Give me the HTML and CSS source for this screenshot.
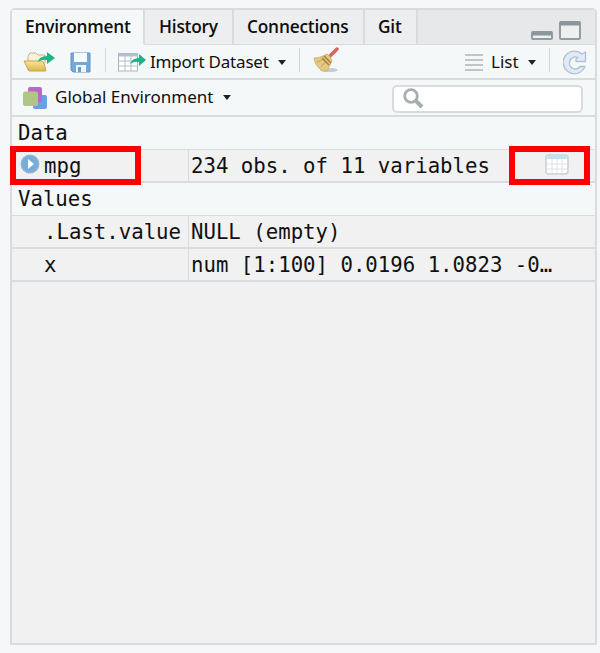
FILE: index.html
```html
<!DOCTYPE html>
<html lang="en">
<head>
<meta charset="utf-8">
<title>Environment</title>
<link rel="stylesheet" href="styles.css">
</head>
<body>
<main class="pane">
  <nav class="tabs">
    <div class="tab tab-env active"><span>Environment</span></div>
    <div class="tab tab-history"><span>History</span></div>
    <div class="tab tab-conn"><span>Connections</span></div>
    <div class="tab tab-git"><span>Git</span></div>
    <div class="window-buttons">
      <svg width="22" height="9" viewBox="0 0 22 9"><rect x="1" y="1" width="20" height="7" rx="1" fill="#edf0f1" stroke="#929da1" stroke-width="2"/><path d="M1 2.5h20" stroke="#8b979b" stroke-width="4"/></svg>
      <svg width="22" height="19" viewBox="0 0 22 19"><rect x="1" y="1" width="20" height="17" rx="1" fill="#edf0f1" stroke="#929da1" stroke-width="2"/><path d="M1 2.5h20" stroke="#8b979b" stroke-width="4"/></svg>
    </div>
  </nav>

  <div class="toolbar">
    <svg class="i-open" width="32" height="22" viewBox="0 0 32 22">
      <defs><linearGradient id="gold" x2="0" y2="1"><stop stop-color="#f6e59f"/><stop offset="1" stop-color="#dfb646"/></linearGradient></defs>
      <path d="M5 19V5l2-3h6l2 2h7v8" fill="#f7f2dc" stroke="#c5b27c"/>
      <path d="M1 10h17q2 0 3 2l2 8H6Z" fill="url(#gold)" stroke="#c9a347" stroke-linejoin="round"/>
      <path d="M15 11Q16 5 24 5V1l8 6-8 6V9Q19 8 15 11Z" fill="#1eb486"/>
    </svg>
    <svg class="i-save" width="21" height="21" viewBox="0 0 21 21">
      <path d="M1 1h19v19H3l-2-2Z" fill="#75a8d5" stroke="#5e96c7"/>
      <path d="M4 1h13v9H4Z" fill="#f5fafc"/><path d="M6 13h10v7H6Z" fill="#edf5fa"/><path d="M8 15h3v5H8Z" fill="#679dcd"/>
    </svg>
    <i class="sep sep-a"></i>
    <svg class="i-import" width="28" height="21" viewBox="0 0 28 21">
      <rect x=".5" y="1.500" width="19" height="17.500" fill="#fff" stroke="#a9b5c2"/>
      <path d="M1 3h19" stroke="#b5c0cc" stroke-width="3"/>
      <path d="M7 4v15M13 4v15M1 9h18M1 14h18" stroke="#b3bec9"/>
      <path d="M12 12Q14 6 21 6V2l7 6-7 6v-4q-5-1-9 2Z" fill="#1eb486"/>
    </svg>
    <span class="label import-label">Import Dataset</span>
    <i class="caret"></i>
    <i class="sep sep-b"></i>
    <svg class="i-broom" width="27" height="26" viewBox="0 0 27 26">
      <ellipse cx="16" cy="23" rx="9" ry="2" fill="#c8cecf"/>
      <path d="M17 9 24 2" stroke="#d8665e" stroke-width="3.500" stroke-linecap="round"/>
      <path d="M10 9 14 7q4 2 5 7L14 24q-4 1-7-2l-3-3-2-4-1-4q5 0 9-2Z" fill="#e3c983" stroke="#c5a65c" stroke-width=".7"/>
      <path d="m11 9 7 7M9 11l7 7" fill="none" stroke="#a97a3e" stroke-width="1.500"/><path d="m4 15 5-2M8 20l4-5" fill="none" stroke="#c3a35c"/>
    </svg>
    <svg class="i-list" width="18" height="17" viewBox="0 0 18 17"><path d="M0 1h18M0 6h18M0 11h18M0 16h18" stroke="#adb4b8" stroke-width="1.600"/></svg>
    <span class="label list-label">List</span>
    <i class="caret"></i>
    <i class="sep sep-c"></i>
    <svg class="i-refresh" width="24" height="25" viewBox="0 0 24 25">
      <path d="M19 4 22.500 2v9.500h-9.500V9l2-1.500A6 6 0 0 0 6.500 13a5.800 5.800 0 0 0 10.500 3.500h5A11.300 11.300 0 1 1 12 1.200 11 11 0 0 1 19 4Z" fill="#e1eaf7" stroke="#b2c0d0" stroke-width="1.300" stroke-linejoin="round"/>
    </svg>
  </div>

  <div class="scope">
    <svg class="i-scope" width="24" height="22" viewBox="0 0 24 22"><rect x="10" y="8" width="14" height="14" rx="2" fill="#6aa0e5"/><rect x="5" y="0" width="14" height="15" rx="2" fill="#b968c8"/><rect x="0" y="4.500" width="15" height="14.500" rx="2" fill="#b1c685"/></svg>
    <span class="label scope-label">Global Environment</span>
    <i class="caret"></i>
    <div class="search"><svg width="21" height="21" viewBox="0 0 21 21"><circle cx="8" cy="8" r="6.300" fill="none" stroke="#a5afb2" stroke-width="2.800"/><path d="m13 13 6 6" stroke="#a5afb2" stroke-width="4"/></svg></div>
  </div>

  <section class="objects">
    <h2 class="group">Data</h2>
    <div class="row">
      <div class="name"><svg class="i-expand" width="20" height="20" viewBox="0 0 20 20"><circle cx="10" cy="10" r="8.700" fill="#78add9" stroke="#91b3d0" stroke-width="1.500"/><path d="m8 5 6 5-6 5Z" fill="#fff"/></svg>mpg</div>
      <div class="value">234 obs. of 11 variables</div>
      <svg class="i-grid" width="24" height="21" viewBox="0 0 24 21"><rect x="1" y="1" width="22" height="19" rx="3" fill="#fff" stroke="#cbd1d6" stroke-width="1.600"/><path d="M3 1.500h18l1 3.500H2Z" fill="#bfe0ec"/><path d="M7 5v14M12 5v14M17 5v14M2 10h20M2 15h20" stroke="#dce0e5"/></svg>
      <b class="mark mark-name"></b><b class="mark mark-grid"></b>
    </div>
    <h2 class="group">Values</h2>
    <div class="row"><div class="name">.Last.value</div><div class="value">NULL (empty)</div></div>
    <div class="row"><div class="name">x</div><div class="value">num [1:100] 0.0196 1.0823 -0…</div></div>
  </section>
</main>
</body>
</html>
```
FILE: styles.css
```css
* { box-sizing: border-box; }
body {
  margin: 0;
  padding: 8px 3px 8px 10px;
  height: 653px;
  background: #f5f7f9;
  color: #101010;
  font-family: "Noto Sans", "Open Sans", sans-serif;
}
svg { display: block; flex: none; }
.pane {
  height: 637px;
  border: 2px solid #d8dcdf;
  border-radius: 5px 5px 0 0;
  background: #f1f1f1;
}
.tabs { display: flex; height: 35px; background: #e6e8e9; }
.tab {
  border-right: 2px solid #d8dcdf;
  border-bottom: 1px solid #d8dcdf;
  background: #eceeef;
  font: 600 17.3px/33px "Open Sans", sans-serif;
  letter-spacing: -0.2px;
  white-space: nowrap;
  padding-left: 13px;
}
.tab.active { background: #f4f8f9; border-bottom-color: #f4f8f9; }
.tab-env { width: 133px; }
.tab-history { width: 89px; padding-left: 14px; }
.tab-conn { width: 131px; }
.tab-git { width: 53px; }
.window-buttons {
  flex: 1;
  display: flex;
  justify-content: flex-end;
  align-items: flex-end;
  gap: 6px;
  padding: 0 14px 4px 0;
  border-bottom: 1px solid #d8dcdf;
}
.toolbar, .scope {
  display: flex;
  align-items: center;
  background: #f4f8f9;
  border-bottom: 2px solid #d8dcdf;
}
.toolbar { height: 35px; padding-top: 1px; }
.scope { height: 37px; }
.label { font-size: 17px; line-height: 24px; white-space: nowrap; flex: none; }
.caret {
  flex: none;
  border: 4px solid transparent;
  border-top: 5px solid #222;
  border-bottom: 0;
}
.sep { flex: none; width: 1px; height: 24px; margin-bottom: 4px; background: #d0d4d7; }
.i-open { margin-left: 11px; }
.i-save { margin-left: 15px; }
.sep-a { margin-left: 14px; }
.i-import { margin-left: 12px; }
.import-label { width: 128px; margin-left: 4px; letter-spacing: -0.2px; }
.sep-b { margin-left: 13px; }
.i-broom { margin: -4px 0 0 13px; }
.i-list { margin-left: auto; }
.list-label { width: 37px; margin-left: 8px; }
.sep-c { margin-left: 13px; }
.i-refresh { margin: 0 8px 0 13px; }
.i-scope { margin-left: 11px; }
.scope-label { width: 168px; margin-left: 8px; margin-top: -1px; }
.search {
  display: flex;
  align-items: center;
  width: 191px;
  height: 28px;
  margin: 2px 12px 0 auto;
  padding-left: 9px;
  border: 2px solid #d8dcdf;
  border-radius: 5px;
  background: #fff;
}
.objects { font: 20.7px/32px "DejaVu Sans Mono", monospace; }
.group {
  height: 32px;
  margin: 0;
  padding-left: 6px;
  background: #f4f8f9;
  font: inherit;
}
.row {
  position: relative;
  display: flex;
  height: 33px;
  border-bottom: 2px solid #d8dcdf;
  background: #f1f1f1;
  white-space: nowrap;
}
.group + .row { height: 34px; border-top: 1px solid #d8dcdf; }
.name { position: relative; width: 177px; padding-left: 32px; border-right: 1px solid #d8dcdf; }
.value { padding-left: 2px; }
.i-expand { position: absolute; left: 8px; top: 4px; }
.i-grid { margin: 4px 26px 0 auto; }
.mark { position: absolute; height: 39px; top: -4px; border: 6px solid #f00; }
.mark-name { left: -2px; width: 131px; }
.mark-grid { right: 5px; width: 81px; }
```
